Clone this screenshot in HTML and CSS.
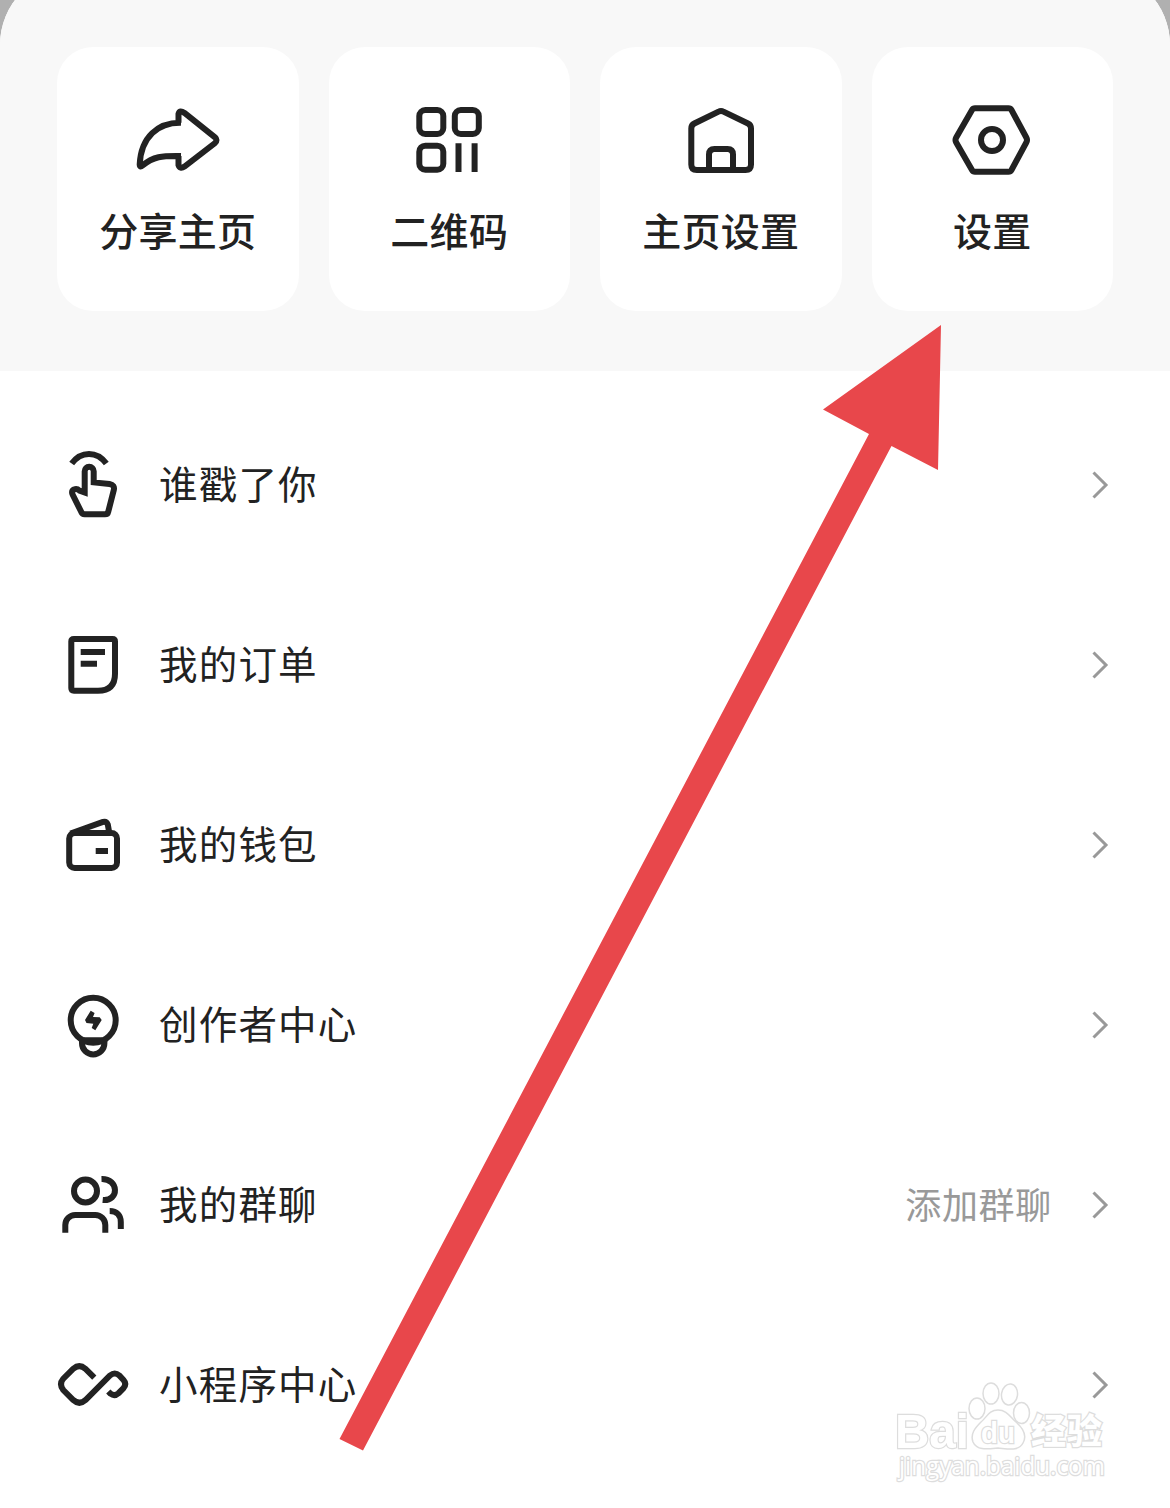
FILE: index.html
```
<!DOCTYPE html>
<html lang="zh-CN">
<head>
  <meta charset="UTF-8">
  <meta name="viewport" content="width=device-width, initial-scale=1.0">
  <title>更多</title>
  <link rel="stylesheet" href="styles.css">
</head>
<body>
  <main class="sheet">
    <section class="shortcuts">
      <a class="card">
        <svg class="card-icon" viewBox="0 0 84 84"><path d="M45 24.8C22 24.4 5 39 3.7 66.5Q3.8 70 6.5 67.6C17 58.5 26 57.6 45 58M42.500 58V67Q44 71.500 48.500 68.6L79 45Q82 42 79 39.3L48.500 15Q43.500 11.500 42.500 16V24.8"/></svg>
        <span class="card-label">分享主页</span>
      </a>
      <a class="card">
        <svg class="card-icon" viewBox="0 0 84 84">
          <rect x="12.3" y="12" width="24" height="24" rx="6"/>
          <rect x="47.8" y="12" width="24" height="24" rx="6"/>
          <rect x="12.3" y="47.7" width="24" height="24" rx="6"/>
          <path d="M51.5 45.3V74M67.6 45.3V74"/>
        </svg>
        <span class="card-label">二维码</span>
      </a>
      <a class="card">
        <svg class="card-icon" viewBox="0 0 84 84"><path d="M39.5 13.7Q42 12.2 44.5 13.7L69 25.5Q72 27 72 30.5V66.5Q72 72 66.5 72H17.8Q12.3 72 12.3 66.5V30.5Q12.3 27 15.3 25.5ZM30 72V56.5Q30 51 35.5 51H48.5Q54 51 54 56.5V72"/></svg>
        <span class="card-label">主页设置</span>
      </a>
      <a class="card">
        <svg class="card-icon" viewBox="0 0 84 84">
          <path d="M25 10.3H58.5Q60.5 10.3 61.5 12L76.3 39.5Q77.7 42 76.3 44.5L61.5 72Q60.5 73.7 58.5 73.7H25Q23 73.7 22 72L6.2 44.5Q4.8 42 6.2 39.5L22 12Q23 10.3 25 10.3Z"/>
          <circle cx="42" cy="42" r="11"/>
        </svg>
        <span class="card-label">设置</span>
      </a>
    </section>

    <nav class="menu">
      <a class="menu-row">
        <svg class="menu-icon" viewBox="0 0 72 72"><path d="M14.7 14.6C24 1.8 40 1.8 49.3 14.6M27.7 40V22.2a4.5 4.5 0 0 1 9 0V33.4L52.5 35Q58 36 56.8 41L51.3 62.5Q50.7 65.3 48 65.3H27.5Q25.3 65.3 24.3 63L15.6 45.5Q14.2 42 17 40.5Q20 39.3 22.5 41.6L27.7 43.5V38"/></svg>
        <span class="menu-label">谁戳了你</span>
        <svg class="chevron" viewBox="0 0 18 30"><path d="M2.5 2.5L15 15L2.5 27.5"/></svg>
      </a>
      <a class="menu-row">
        <svg class="menu-icon" viewBox="0 0 72 72"><path d="M17 10H55.5Q58 10 58 12.5V44.7Q58 61.7 41 61.7H17Q14.3 61.7 14.3 59V12.5Q14.3 10 17 10ZM23.7 23H48M23.7 34.8H40"/></svg>
        <span class="menu-label">我的订单</span>
        <svg class="chevron" viewBox="0 0 18 30"><path d="M2.5 2.5L15 15L2.5 27.5"/></svg>
      </a>
      <a class="menu-row">
        <svg class="menu-icon" viewBox="0 0 72 72">
          <rect x="12.2" y="24" width="47.8" height="35" rx="5.5"/>
          <path d="M13.5 24.5L46 12.9Q49.5 12 50.8 15.5L52.3 24M38.7 42H51"/>
        </svg>
        <span class="menu-label">我的钱包</span>
        <svg class="chevron" viewBox="0 0 18 30"><path d="M2.5 2.5L15 15L2.5 27.5"/></svg>
      </a>
      <a class="menu-row">
        <svg class="menu-icon" viewBox="0 0 72 72">
          <circle cx="36.2" cy="31.2" r="22.5"/>
          <path d="M25 51V54.2a11.2 11.2 0 0 0 22.4 0V51M27 51.2H45.4"/>
          <path class="solid" d="M33.7 21.7L37.6 24L36 28L42.7 28.3L44.7 31L38.3 41.3L34.7 39L36.3 34.7L29.5 34L28 31Z"/>
        </svg>
        <span class="menu-label">创作者中心</span>
        <svg class="chevron" viewBox="0 0 18 30"><path d="M2.5 2.5L15 15L2.5 27.5"/></svg>
      </a>
      <a class="menu-row">
        <svg class="menu-icon" viewBox="0 0 72 72">
          <circle cx="28.5" cy="22" r="11.5"/>
          <path d="M8.3 63.7V56a10 10 0 0 1 10-10H38.3a10 10 0 0 1 10 10V63.7M44.5 10C62 9.5 62.5 32.5 45.7 31M52.7 42C60 42 63.8 46.5 63.8 53V60"/>
        </svg>
        <span class="menu-label">我的群聊</span>
        <span class="menu-note">添加群聊</span>
        <svg class="chevron" viewBox="0 0 18 30"><path d="M2.5 2.5L15 15L2.5 27.5"/></svg>
      </a>
      <a class="menu-row">
        <svg class="menu-icon" viewBox="0 0 72 72"><path d="M37.3 28.7L28.3 19.7Q22.3 14.5 16.3 19.7L6.3 29.7Q1.7 35.3 6.3 41L16.3 51Q22.3 56.5 28.5 51L53 26.5Q57.8 22.5 62.3 26.5L66.5 31Q70 35 66.5 39.2L61.5 44.2Q57.5 47.7 53.5 44.7L51.3 42.5"/></svg>
        <span class="menu-label">小程序中心</span>
        <svg class="chevron" viewBox="0 0 18 30"><path d="M2.5 2.5L15 15L2.5 27.5"/></svg>
      </a>
    </nav>
  </main>

  <!-- watermark -->
  <svg class="watermark" viewBox="0 0 240 140">
    <text class="wm-name" x="15" y="87.5" textLength="74" lengthAdjust="spacingAndGlyphs">Bai</text>
    <ellipse cx="97" cy="48.5" rx="8" ry="10.5"/>
    <ellipse cx="111" cy="33.5" rx="8" ry="10.5"/>
    <ellipse cx="129.5" cy="34.5" rx="8" ry="10.5" transform="rotate(8 129.5 34.5)"/>
    <ellipse cx="141.5" cy="53" rx="8" ry="10.5"/>
    <path d="M118 50C127 50 130 57 136 62C144 69 147 76 143 83C139 91 130 89 118 88C108 89 97 91 93 82C90 74 95 68 101 62C107 57 109 50 118 50Z"/>
    <text class="wm-du" x="101" y="82.5" textLength="34" lengthAdjust="spacingAndGlyphs">du</text>
    <text class="wm-cn" x="151" y="84" textLength="71">经验</text>
    <text class="wm-url" x="19" y="115" textLength="206" lengthAdjust="spacingAndGlyphs">jingyan.baidu.com</text>
  </svg>

  <!-- arrow pointing at the settings card -->
  <svg class="pointer" viewBox="0 0 1170 1508"><path d="M941 325L938 470L891.5 446L363 1450.5L339.5 1439L869 434L823 409.5Z"/></svg>
</body>
</html>
```
FILE: styles.css
```
* {
  margin: 0;
  padding: 0;
  box-sizing: border-box;
}

body {
  width: 1170px;
  height: 1508px;
  overflow: hidden;
  position: relative;
  background: #b0b0b0;
  color: #222;
  font-family: 'Noto Sans CJK SC', sans-serif;
}

svg {
  display: block;
  flex: none;
  fill: none;
  stroke: #222;
  stroke-width: 6;
}

.sheet {
  height: 1538px;
  margin-top: -30px;
  background: #fff;
  border-radius: 75px 75px 0 0;
  overflow: hidden;
}

.shortcuts {
  display: flex;
  gap: 30px;
  height: 401px;
  padding: 77px 57px 60px;
  background: #f8f8f8;
}

.card {
  flex: 1;
  display: flex;
  flex-direction: column;
  align-items: center;
  padding-top: 51px;
  background: #fff;
  border-radius: 36px;
}

.card-icon {
  width: 84px;
  height: 84px;
}

.card-label {
  margin-top: 17px;
  font-size: 39px;
  font-weight: 500;
  line-height: 60px;
  letter-spacing: 0.3px;
}

.menu {
  padding: 24px 57px 0;
}

.menu-row {
  display: flex;
  align-items: center;
  height: 180px;
}

.menu-icon {
  width: 72px;
  height: 72px;
}

.menu-icon .solid {
  fill: #222;
  stroke: none;
}

.menu-label {
  margin-left: 30px;
  padding-bottom: 6px;
  font-size: 38.5px;
  line-height: 60px;
  letter-spacing: 1.2px;
}

.menu-note {
  margin-left: auto;
  padding-bottom: 5px;
  color: #999;
  font-size: 36px;
  line-height: 60px;
  letter-spacing: 0.7px;
}

.chevron {
  width: 18px;
  height: 30px;
  margin-left: auto;
  margin-right: 4px;
  stroke: #999;
  stroke-width: 3;
}

.menu-note + .chevron {
  margin-left: 39px;
}

.pointer {
  position: absolute;
  top: 0;
  left: 0;
  width: 1170px;
  height: 1508px;
  fill: #e8474b;
  stroke: none;
}

.watermark {
  position: absolute;
  left: 880px;
  top: 1360px;
  width: 240px;
  height: 140px;
  fill: #fff;
  stroke: #ddd;
  stroke-width: 1.5;
}

.watermark text {
  paint-order: stroke;
  stroke-width: 2.5;
}

.wm-name {
  font: bold 49px 'Liberation Sans', sans-serif;
}

.wm-du {
  font: bold 29px 'Liberation Sans', sans-serif;
}

.wm-cn {
  font: 900 35px 'Noto Sans CJK SC', sans-serif;
}

.wm-url {
  font: 25px 'Open Sans', sans-serif;
}
```
